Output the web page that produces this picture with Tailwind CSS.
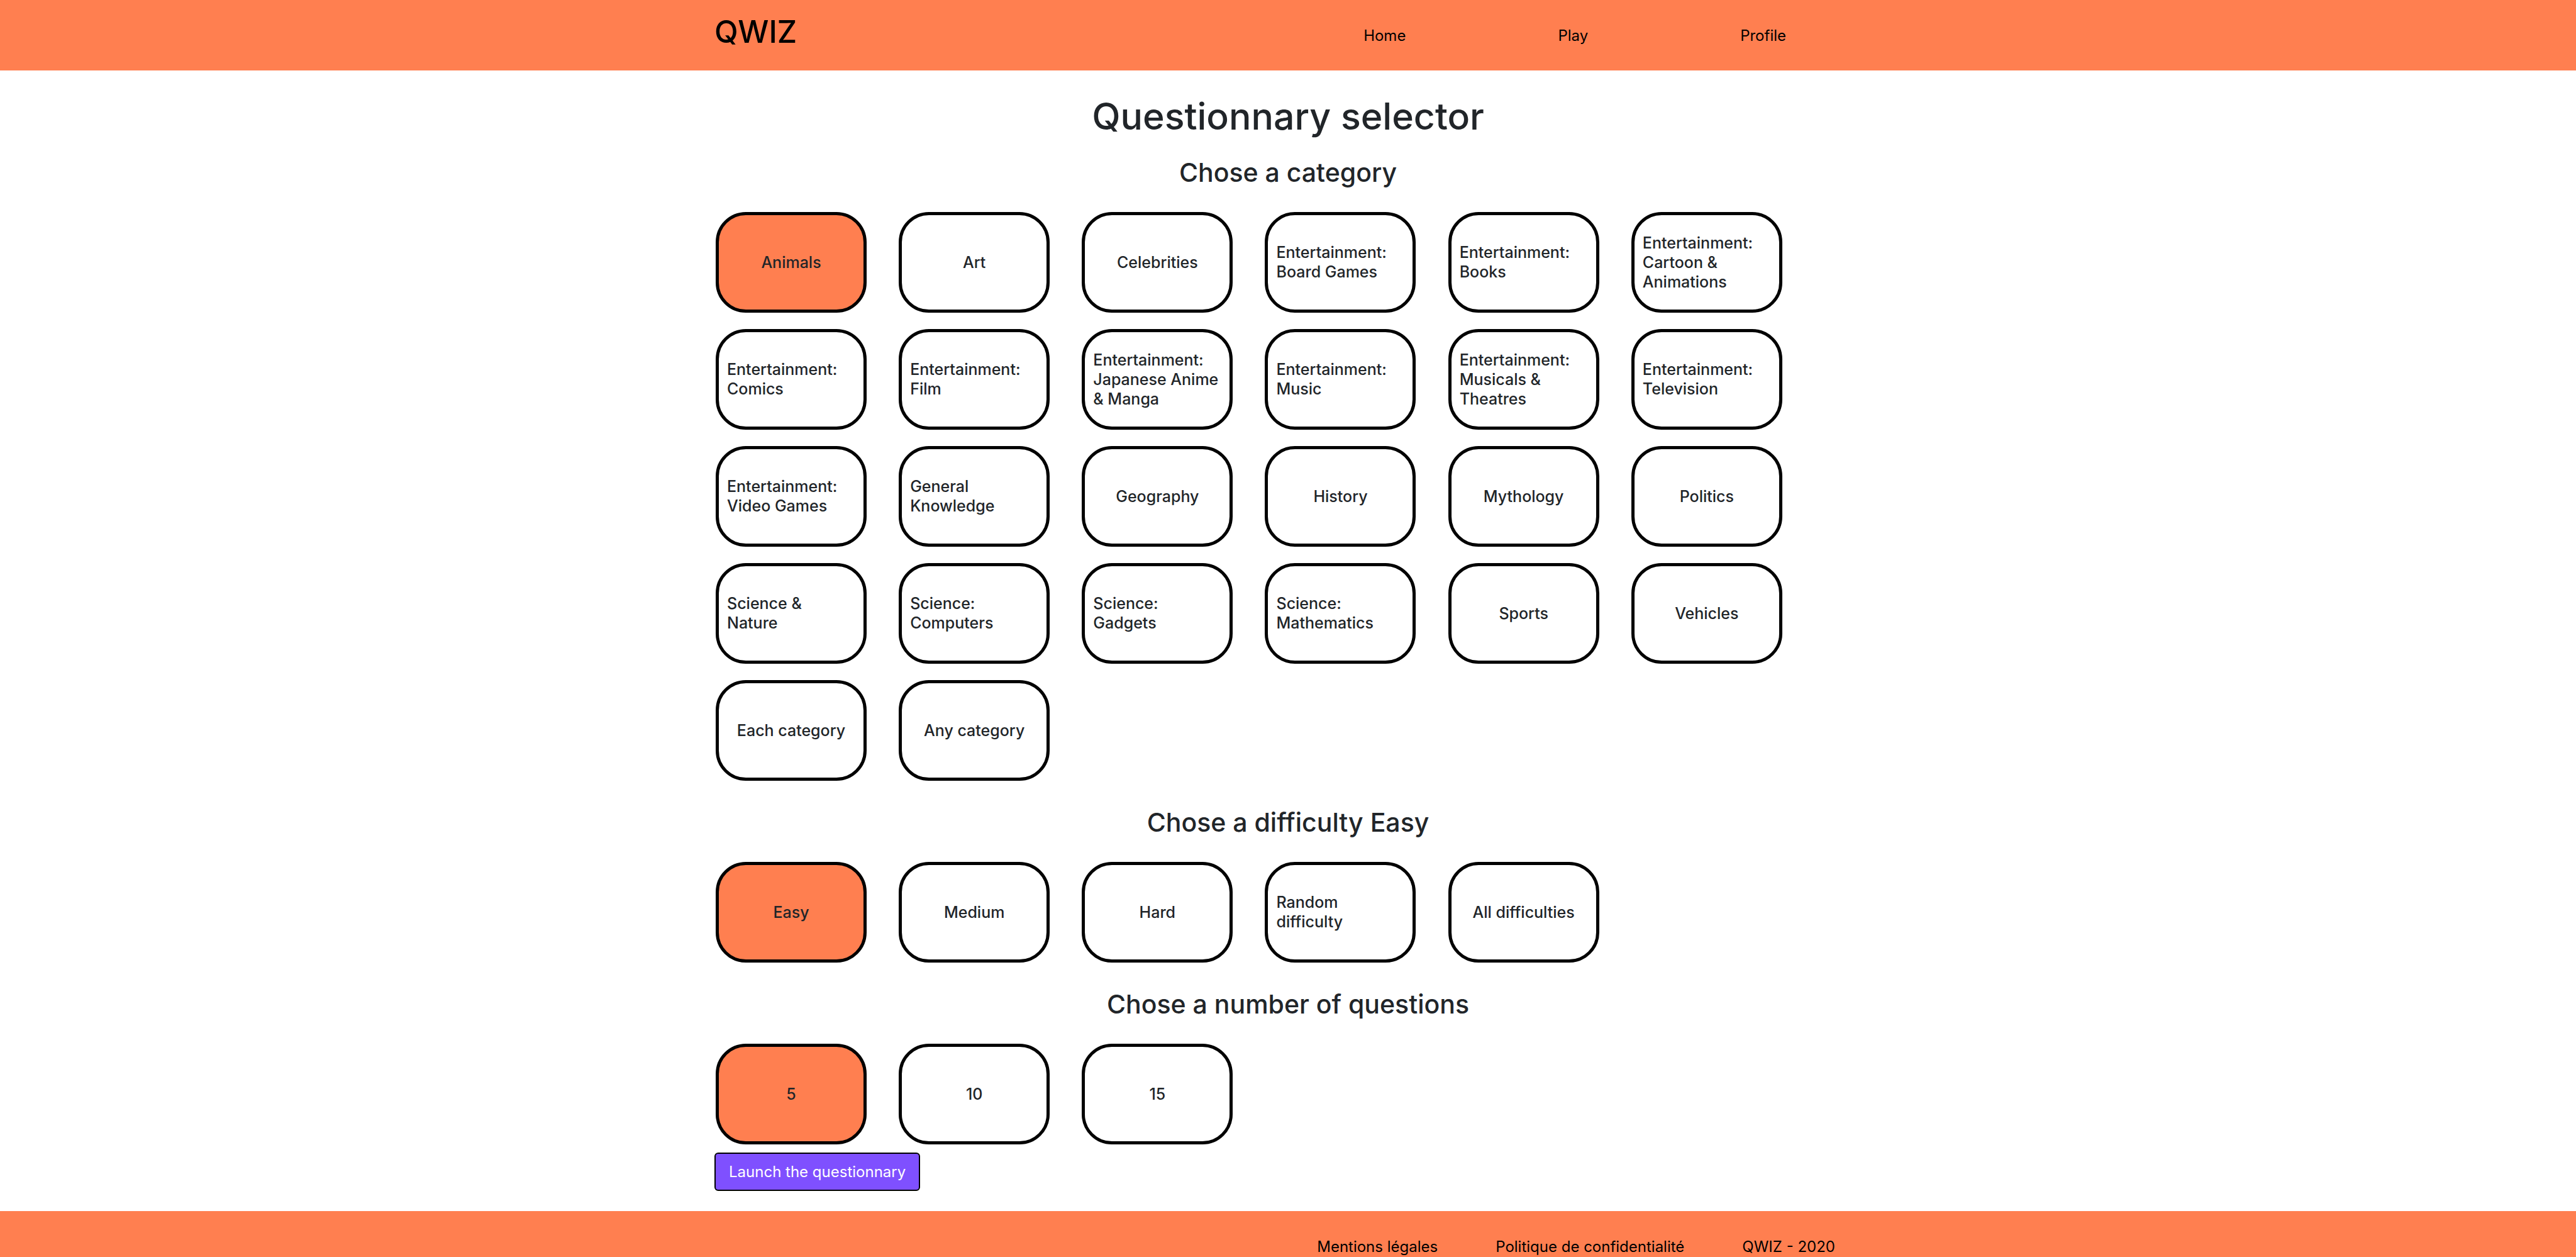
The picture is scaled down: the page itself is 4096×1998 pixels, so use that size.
<!DOCTYPE html>
<html lang="en">
<head>
<meta charset="utf-8">
<meta name="viewport" content="width=device-width, initial-scale=1">
<title>QWIZ</title>
<script src="https://cdn.jsdelivr.net/npm/@tailwindcss/browser@4"></script>
</head>
<body class="flex min-h-screen flex-col bg-white font-[Inter,sans-serif] text-[24px] leading-[38px] text-[#212529]">
  <header class="bg-[#ff7f50] text-black">
    <div class="mx-auto flex h-[112px] w-full max-w-[1824px] items-start justify-between">
      <a href="#" class="pt-5 text-[49px] leading-[62px] font-medium">QWIZ</a>
      <nav class="flex gap-[242px] pt-[38px] pr-[120px]">
        <a href="#">Home</a>
        <a href="#">Play</a>
        <a href="#">Profile</a>
      </nav>
    </div>
  </header>

  <main class="mx-auto w-full max-w-[1824px] pt-[34px] pb-8">
    <h1 class="text-center text-[59px] leading-[77px] font-medium">Questionnary selector</h1>

    <section class="pt-6">
      <h2 class="mb-9 text-center text-[41px] leading-[54px] font-medium">Chose a category</h2>
      <div id="categories" class="ml-[2px] grid max-w-[1747px] grid-cols-6 gap-y-[26px]"></div>
    </section>

    <section class="pt-[39px]">
      <h2 class="mb-9 text-center text-[41px] leading-[54px] font-medium">Chose a difficulty Easy</h2>
      <div id="difficulties" class="ml-[2px] grid max-w-[1747px] grid-cols-6 gap-y-[26px]"></div>
    </section>

    <section class="pt-[39px]">
      <h2 class="mb-9 text-center text-[41px] leading-[54px] font-medium">Chose a number of questions</h2>
      <div id="counts" class="ml-[2px] grid max-w-[1747px] grid-cols-6 gap-y-[26px]"></div>
    </section>

    <button type="button" class="mt-[13px] block rounded-md border-2 border-black bg-[#7f50ff] px-[21px] py-[10px] leading-[37px] text-white">Launch the questionnary</button>
  </main>

  <footer class="grow bg-[#ff7f50] text-black">
    <div class="mx-auto flex w-full max-w-[1824px] justify-end gap-[92px] pt-[41px] pr-[42px] leading-[31px]">
      <a href="#">Mentions légales</a>
      <a href="#">Politique de confidentialité</a>
      <span>QWIZ - 2020</span>
    </div>
  </footer>

  <template id="card">
    <button type="button" class="flex h-[160px] w-[240px] items-center justify-center rounded-[48px] border-5 border-black px-[13px] text-left text-[25px] leading-[31px] font-medium aria-pressed:bg-[#ff7f50]"><span></span></button>
  </template>

  <script>
    const groups = {
      categories: ["Animals", "Art", "Celebrities", "Entertainment: Board Games", "Entertainment: Books", "Entertainment: Cartoon & Animations",
        "Entertainment: Comics", "Entertainment: Film", "Entertainment: Japanese Anime & Manga", "Entertainment: Music", "Entertainment: Musicals & Theatres", "Entertainment: Television",
        "Entertainment: Video Games", "General Knowledge", "Geography", "History", "Mythology", "Politics",
        "Science & Nature", "Science: Computers", "Science: Gadgets", "Science: Mathematics", "Sports", "Vehicles",
        "Each category", "Any category"],
      difficulties: ["Easy", "Medium", "Hard", "Random difficulty", "All difficulties"],
      counts: ["5", "10", "15"]
    };
    const template = document.getElementById("card");
    for (const [id, labels] of Object.entries(groups)) {
      const grid = document.getElementById(id);
      labels.forEach((label, i) => {
        const card = template.content.firstElementChild.cloneNode(true);
        card.firstElementChild.textContent = label;
        card.setAttribute("aria-pressed", i === 0);
        card.addEventListener("click", () => {
          for (const other of grid.children) other.setAttribute("aria-pressed", other === card);
        });
        grid.append(card);
      });
    }
  </script>
</body>
</html>
